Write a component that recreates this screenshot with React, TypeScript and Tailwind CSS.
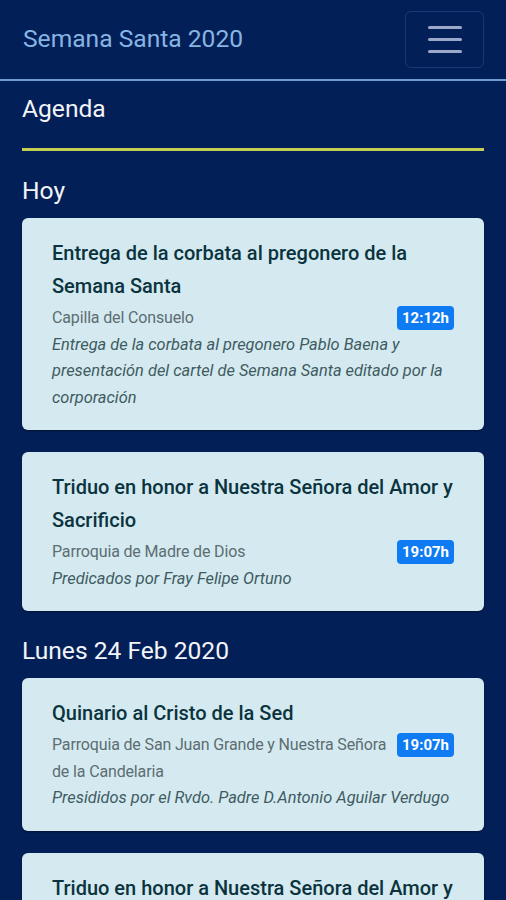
import React from "react";

type Ev = { title: string; place: string; time: string; desc: string };

const hoy: Ev[] = [
  {
    title: "Entrega de la corbata al pregonero de la Semana Santa",
    place: "Capilla del Consuelo",
    time: "12:12h",
    desc: "Entrega de la corbata al pregonero Pablo Baena y presentación del cartel de Semana Santa editado por la corporación",
  },
  {
    title: "Triduo en honor a Nuestra Señora del Amor y Sacrificio",
    place: "Parroquia de Madre de Dios",
    time: "19:07h",
    desc: "Predicados por Fray Felipe Ortuno",
  },
];

const lunes: Ev[] = [
  {
    title: "Quinario al Cristo de la Sed",
    place: "Parroquia de San Juan Grande y Nuestra Señora de la Candelaria",
    time: "19:07h",
    desc: "Presididos por el Rvdo. Padre D.Antonio Aguilar Verdugo",
  },
  {
    title: "Triduo en honor a Nuestra Señora del Amor y Sacrificio",
    place: "Parroquia de Madre de Dios",
    time: "19:07h",
    desc: "Predicados por Fray Felipe Ortuno",
  },
];

function Card({ e }: { e: Ev }) {
  return (
    <div className="rounded-[6px] bg-[#d4eaf0] px-[30px] pt-[19px] pb-[19px] shadow-[0_1px_2px_rgba(0,0,0,0.4)]">
      <div className="text-[20px] font-medium leading-[33px] text-[#0b333e]">{e.title}</div>
      <div className="mt-[2px] flex items-start justify-between gap-[6px]">
        <div className="text-[16px] leading-[26.5px] tracking-[-0.15px] text-[#5d6d72]">{e.place}</div>
        <span className="mt-[1px] shrink-0 rounded-[4px] bg-[#0f7bf2] px-[5px] text-[15px] font-bold leading-[24px] text-white">
          {e.time}
        </span>
      </div>
      <div className="text-[16.4px] italic leading-[26.5px] text-[#3f5a61]">{e.desc}</div>
    </div>
  );
}

export default function App() {
  return (
    <div
      className="h-[900px] w-[506px] overflow-hidden bg-[#021f57]"
      style={{ fontFamily: "Roboto, 'Noto Sans', sans-serif" }}
    >
      <header className="flex h-[81px] items-center justify-between border-b-2 border-[#6e9dd3] pl-[23px] pr-[22px]">
        <div className="text-[24.6px] text-[#87b5e3]">Semana Santa 2020</div>
        <button className="flex h-[57px] w-[79px] flex-col items-center justify-center gap-[9px] rounded-[6px] border border-[#1b3874]">
          <span className="block h-[3px] w-[34px] rounded bg-[#9ba8c9]" />
          <span className="block h-[3px] w-[34px] rounded bg-[#9ba8c9]" />
          <span className="block h-[3px] w-[34px] rounded bg-[#9ba8c9]" />
        </button>
      </header>
      <main className="px-[22px]">
        <h1 className="pt-[11px] text-[24.6px] leading-[34px] text-[#f2f4f8]">Agenda</h1>
        <div className="mt-[22px] h-[3px] bg-[#c5cf52]" />
        <h2 className="mt-[23px] text-[24.6px] leading-[34px] text-[#f2f4f8]">Hoy</h2>
        <div className="mt-[10px] flex flex-col gap-[22px]">
          {hoy.map((e, i) => (
            <Card key={i} e={e} />
          ))}
        </div>
        <h2 className="mt-[23px] text-[24.6px] leading-[34px] text-[#f2f4f8]">Lunes 24 Feb 2020</h2>
        <div className="mt-[10px] flex flex-col gap-[22px]">
          {lunes.map((e, i) => (
            <Card key={i} e={e} />
          ))}
        </div>
      </main>
    </div>
  );
}
